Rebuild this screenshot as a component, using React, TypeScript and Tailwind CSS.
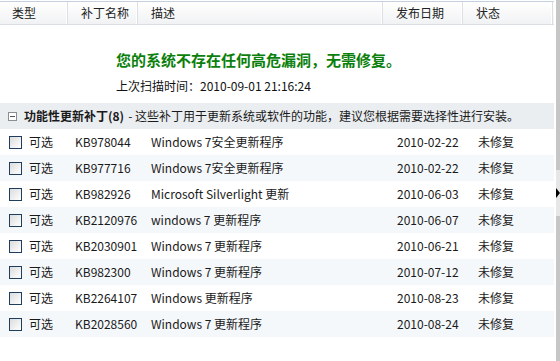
import React from "react";

const ROWS = [
  { kb: "KB978044", desc: "Windows 7安全更新程序", date: "2010-02-22" },
  { kb: "KB977716", desc: "Windows 7安全更新程序", date: "2010-02-22" },
  { kb: "KB982926", desc: "Microsoft Silverlight 更新", date: "2010-06-03" },
  { kb: "KB2120976", desc: "windows 7 更新程序", date: "2010-06-07" },
  { kb: "KB2030901", desc: "Windows 7 更新程序", date: "2010-06-21" },
  { kb: "KB982300", desc: "Windows 7 更新程序", date: "2010-07-12" },
  { kb: "KB2264107", desc: "Windows 更新程序", date: "2010-08-23" },
  { kb: "KB2028560", desc: "Windows 7 更新程序", date: "2010-08-24" },
];

const COLS = "grid grid-cols-[68px_70px_245px_80px_90px_1fr]";

function HeadCell({ children, first }: { children?: React.ReactNode; first?: boolean }) {
  return (
    <div className={`flex items-center border-r border-[#dcdfe3] shadow-[inset_-1px_0_0_#ffffff] ${first ? "pl-3" : "pl-[13px]"}`}>
      {children}
    </div>
  );
}

export default function App() {
  return (
    <div className="flex w-[560px] h-[361px] bg-white overflow-hidden text-[12px] text-[#1a1a1a] font-['Noto_Sans_CJK_SC','Noto_Sans',sans-serif]">
      <div className="w-[554px] flex flex-col">
        {/* column headers */}
        <div className={`${COLS} mt-px h-[24px] border-t border-[#c3d0dd] border-b border-b-[#dadde1] bg-gradient-to-b from-white to-[#f1f2f4] text-[#222]`}>
          <HeadCell first>类型</HeadCell>
          <HeadCell>补丁名称</HeadCell>
          <HeadCell>描述</HeadCell>
          <HeadCell>发布日期</HeadCell>
          <HeadCell>状态</HeadCell>
          <div />
        </div>

        {/* result */}
        <div className="h-[78px] pl-[116px] pt-[22px]">
          <div className="text-[15px] font-bold text-[#0b7f0b] leading-[26px]">您的系统不存在任何高危漏洞，无需修复。</div>
          <div className="leading-[26px] text-[#111]">上次扫描时间：2010-09-01 21:16:24</div>
        </div>

        {/* group header */}
        <div className="h-[26px] flex items-center bg-[#ebeef1] pl-2">
          <span className="w-[9px] h-[9px] border border-[#8a8f96] bg-white flex items-center justify-center mr-[7px]">
            <span className="w-[5px] h-px bg-[#555]" />
          </span>
          <span className="font-bold">功能性更新补丁(8)</span>
          <span className="ml-1">- 这些补丁用于更新系统或软件的功能，建议您根据需要选择性进行安装。</span>
        </div>

        {ROWS.map((r, i) => (
          <div key={r.kb} className={`${COLS} h-[26px] items-center ${i % 2 ? "bg-[#f5f8fb]" : "bg-white"}`}>
            <div className="flex items-center pl-[9px] gap-[7px]">
              <span className="w-[13px] h-[13px] border border-[#1f3e5e] bg-gradient-to-br from-[#dcdcdc] to-white" />
              <span>可选</span>
            </div>
            <div className="pl-[7px]">{r.kb}</div>
            <div className="pl-[13px]">{r.desc}</div>
            <div className="pl-[14px]">{r.date}</div>
            <div className="pl-[15px]">未修复</div>
            <div />
          </div>
        ))}
      </div>
      <div className="w-[2px]" />
      <div className="w-[4px] bg-[#c6c6c6] flex flex-col">
        <div className="mt-[170px] h-[46px] bg-[#e6e6e6] flex items-center">
          <span className="w-0 h-0 border-y-[5px] border-y-transparent border-l-[4px] border-l-black" />
        </div>
      </div>
    </div>
  );
}
